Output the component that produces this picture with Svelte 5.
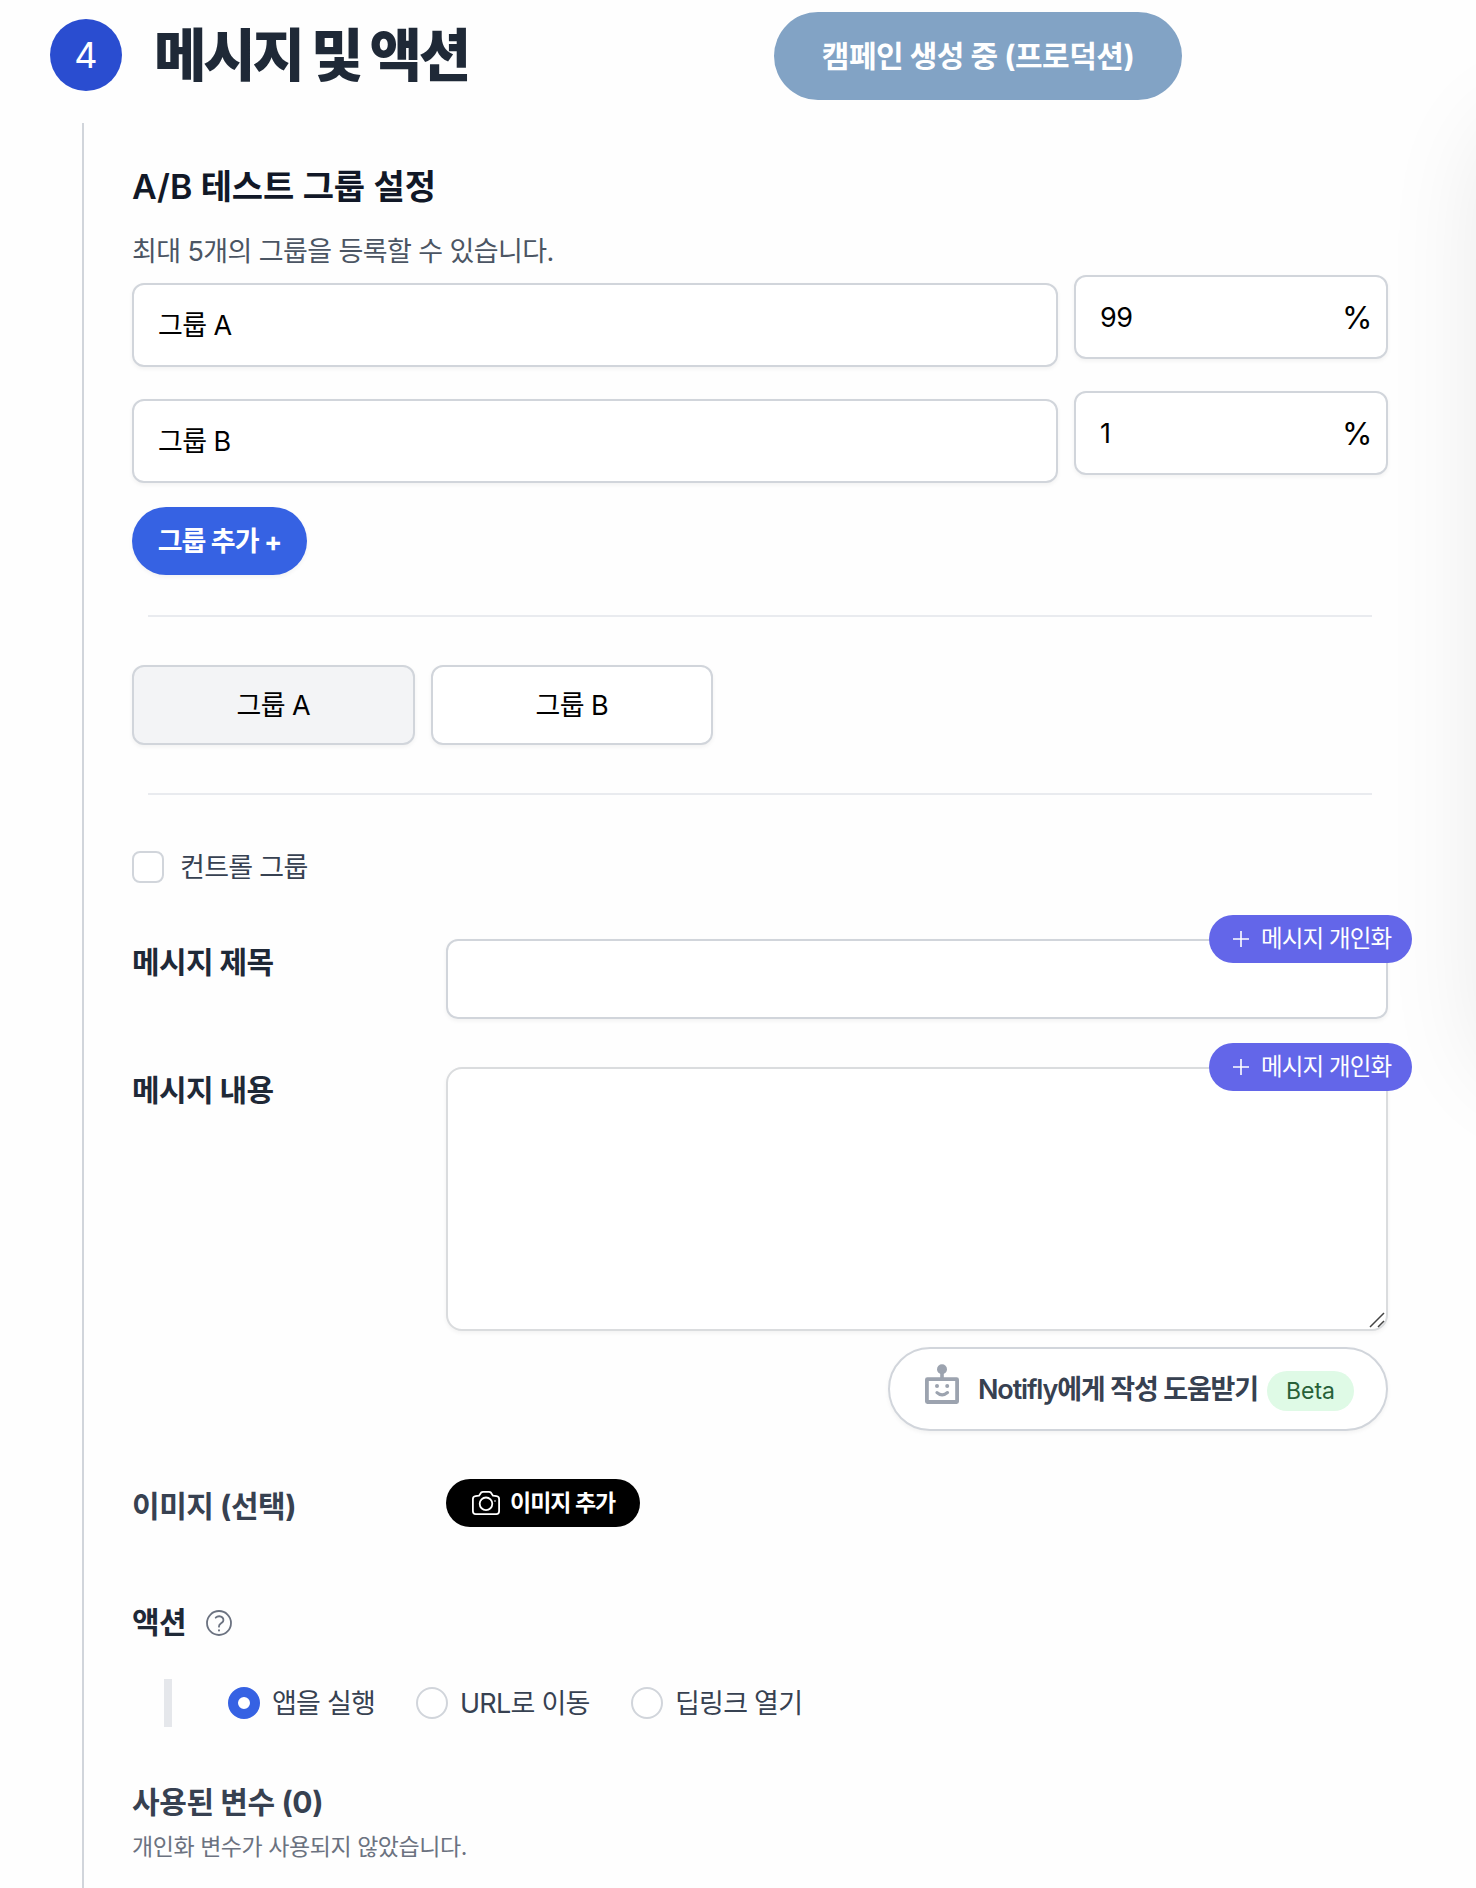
<script>
  let groups = $state([
    { name: '그룹 A', ratio: '99' },
    { name: '그룹 B', ratio: '1' }
  ]);
  let active = $state(0);
  let action = $state(0);
  const actions = ['앱을 실행', 'URL로 이동', '딥링크 열기'];
</script>

{#snippet personalize()}
  <button class="personalize">
    <svg width="16" height="16" viewBox="0 0 16 16"><path d="M8 0v16M0 8h16" stroke="#fff" stroke-width="1.6" /></svg>
    <span>메시지 개인화</span>
  </button>
{/snippet}

<main>
  <div class="side-shadow"></div>
  <header>
    <div class="step">4</div>
    <h1>메시지 및 액션</h1>
    <button class="status"><span>캠페인 생성 중 (프로덕션)</span></button>
  </header>

  <section class="body">
    <h2>A/B 테스트 그룹 설정</h2>
    <p class="desc">최대 5개의 그룹을 등록할 수 있습니다.</p>

    <div class="groups">
      {#each groups as g}
        <div class="group">
          <div class="field name">{g.name}</div>
          <div class="field ratio"><span class="num">{g.ratio}</span><span class="pct">%</span></div>
        </div>
      {/each}
    </div>
    <button class="add"><span>그룹 추가 +</span></button>

    <hr />
    <div class="tabs">
      {#each groups as g, i}
        <button class="tab" class:on={active === i} onclick={() => (active = i)}>{g.name}</button>
      {/each}
    </div>
    <hr />

    <div class="control"><i class="check"></i><span>컨트롤 그룹</span></div>

    <div class="row title-row">
      <h3>메시지 제목</h3>
      <div class="box short">{@render personalize()}</div>
    </div>
    <div class="row content-row">
      <h3>메시지 내용</h3>
      <div class="box tall">
        {@render personalize()}
        <svg class="grip" width="16" height="16" viewBox="0 0 16 16"><path d="M1 15L15 1M9 15l6-6" stroke="#444" stroke-width="1.5" /></svg>
      </div>
    </div>

    <div class="assist-row">
      <button class="assist">
        <svg width="34" height="40" viewBox="0 0 34 40">
          <circle cx="17" cy="5.2" r="5" fill="#9ca3af" />
          <path d="M15.200 8h3.600v7h-3.600z" fill="#9ca3af" />
          <rect x="1.900" y="15.200" width="30.200" height="22.800" rx="0.500" fill="none" stroke="#9ca3af" stroke-width="3.800" stroke-linejoin="round" />
          <circle cx="12" cy="22" r="2" fill="#9ca3af" />
          <circle cx="22.200" cy="22" r="2" fill="#9ca3af" />
          <path d="M12 28.600q5 4.600 10.500 0" fill="none" stroke="#9ca3af" stroke-width="3.200" stroke-linecap="round" />
        </svg>
        <span class="assist-text">Notifly에게 작성 도움받기</span>
        <span class="beta">Beta</span>
      </button>
    </div>

    <div class="row image-row">
      <h3 class="soft">이미지 (선택)</h3>
      <button class="image">
        <svg width="28" height="24" viewBox="0 0 28 24" fill="none" stroke="#fff" stroke-width="1.800" stroke-linejoin="round">
          <path d="M9.200 1.500Q9.800.9 11 .9h6q1.200 0 1.800.6l2.200 3.200 3.500.5q2.600.4 2.600 2.800v12.300q0 2.800-2.800 2.800H3.700q-2.800 0-2.800-2.800V8q0-2.400 2.600-2.800L7 4.700z" />
          <circle cx="14" cy="12.800" r="6.300" />
          <circle cx="23" cy="10" r=".4" stroke-width="1" />
        </svg>
        <span>이미지 추가</span>
      </button>
    </div>

    <div class="action-title">
      <h3>액션</h3>
      <svg width="26" height="26" viewBox="0 0 26 26" fill="none" stroke="#6b7280" stroke-width="1.800" stroke-linecap="round">
        <circle cx="13" cy="13" r="12" />
        <path d="M9.700 7.700c1.900-1.900 5-1.900 6.700-.2 1.500 1.500 1.300 3.700-.3 5-1.500 1.200-3.100 1.700-3.100 3.700v.5" />
        <path d="M13 20.300v.1" stroke-width="2" />
      </svg>
    </div>

    <div class="radios">
      {#each actions as a, i}
        <button class="radio r{i}" onclick={() => (action = i)}><i class:sel={action === i}></i><span>{a}</span></button>
      {/each}
    </div>

    <h3 class="soft vars">사용된 변수 (0)</h3>
    <p class="note">개인화 변수가 사용되지 않았습니다.</p>
  </section>
</main>

<style>
  :global(body) { background: #fefefe; }
  * { box-sizing: border-box; margin: 0; }
  main {
    position: relative;
    width: 1476px;
    height: 1888px;
    overflow: hidden;
    display: flex;
    flex-direction: column;
    font-family: Inter, 'Noto Sans CJK KR', sans-serif;
    font-size: 27px;
    white-space: nowrap;
    color: #000;
  }
  button { font: inherit; border: 0; padding: 0; background: none; color: inherit; display: flex; align-items: center; white-space: nowrap; }
  .side-shadow {
    position: absolute;
    left: 1484px;
    top: 120px;
    width: 400px;
    height: 960px;
    border-radius: 60px;
    box-shadow: 0 0 104px rgba(0, 0, 0, 0.09);
  }
  header { height: 123px; flex: none; display: flex; align-items: flex-start; padding-left: 50px; }
  .step { width: 72px; height: 72px; margin-top: 19px; border-radius: 50%; background: #2a4dd0; color: #fff; font-size: 36px; line-height: 72px; text-align: center; }
  h1 { margin: 11px 0 0 32px; width: 620px; font-size: 57px; line-height: 90px; font-weight: 800; letter-spacing: -3.200px; color: #1f2937; }
  .status { margin-top: 12px; width: 408px; height: 88px; border-radius: 44px; justify-content: center; padding-bottom: 4px; background: #82a3c5; color: #fff; font-size: 30px; font-weight: 700; letter-spacing: -0.500px; }
  .body { flex: 1; margin-left: 82px; border-left: 2px solid #d1d5db; padding: 36px 88px 0 48px; display: flex; flex-direction: column; align-items: flex-start; }
  h2 { font-size: 34px; line-height: 56px; height: 56px; font-weight: 600; letter-spacing: -0.100px; color: #111827; }
  .desc { margin-top: 17px; height: 39px; line-height: 40px; color: #4b5563; letter-spacing: -0.600px; }
  .groups { margin-top: 4px; padding-top: 8px; display: flex; flex-direction: column; gap: 32px; }
  .group { display: flex; gap: 16px; align-items: flex-start; height: 84px; }
  .group .ratio { margin-top: -8px; }
  .field { height: 84px; border: 2px solid #d1d5db; border-radius: 12px; background: #fff; padding: 0 26px 0 24px; display: flex; align-items: center; justify-content: space-between; box-shadow: 0 2px 4px rgba(0, 0, 0, 0.05); letter-spacing: -0.600px; }
  .name { width: 926px; padding-bottom: 3px; }
  .ratio { width: 314px; padding-right: 15px; }
  .num { font-size: 27px; }
  .pct { font-size: 31px; letter-spacing: -1.500px; }
  .add { margin-top: 24px; width: 175px; height: 68px; border-radius: 34px; justify-content: center; padding-bottom: 3px; background: #3662e3; color: #fff; font-weight: 700; letter-spacing: -1px; box-shadow: 0 2px 4px rgba(0, 0, 0, 0.05); }
  hr { width: 1224px; height: 2px; border: 0; background: #e9ebef; margin: 40px 0 0 16px; }
  .tabs { margin-top: 48px; display: flex; gap: 16px; }
  .tab { width: 282.500px; height: 80px; border: 2px solid #d1d5db; border-radius: 12px; background: #fff; justify-content: center; padding-bottom: 3px; letter-spacing: -0.600px; box-shadow: 0 2px 4px rgba(0, 0, 0, 0.05); }
  .tab.on { background: #f3f4f6; }
  .tabs + hr { margin-top: 48px; }
  .control { margin-top: 56px; height: 32px; display: flex; align-items: center; gap: 16px; color: #374151; letter-spacing: -0.700px; }
  .control span { padding-bottom: 3px; }
  .check { width: 32px; height: 32px; border: 2px solid #d1d5db; border-radius: 8px; background: #fff; }
  h3 { font-size: 30px; line-height: 46px; height: 48px; font-weight: 700; letter-spacing: -0.600px; color: #1f2937; }
  h3.soft { color: #374151; line-height: 47px; }
  .row { display: flex; align-items: flex-start; }
  .row h3 { width: 314px; }
  .image-row h3 { letter-spacing: -0.450px; }
  .title-row { margin-top: 56px; }
  .content-row { margin-top: 48px; }
  .box { position: relative; width: 942px; border: 2px solid #d1d5db; border-radius: 12px; background: #fff; box-shadow: 0 2px 4px rgba(0, 0, 0, 0.05); }
  .short { height: 80px; }
  .tall { height: 264px; border-color: #dadcde; border-radius: 16px; }
  .personalize { position: absolute; right: -26px; top: -26px; width: 203px; height: 48px; border-radius: 24px; background: #6366e9; color: #fff; font-size: 23.500px; padding-left: 24px; gap: 12px; letter-spacing: -0.850px; }
  .personalize span { padding-bottom: 4px; }
  .grip { position: absolute; right: 1px; bottom: 1px; }
  .assist-row { align-self: flex-end; margin-top: 16px; }
  .assist { width: 500px; height: 84px; border: 2px solid #d1d5db; border-radius: 42px; background: #fff; padding-left: 35px; box-shadow: 0 2px 4px rgba(0, 0, 0, 0.05); color: #374151; }
  .assist svg { margin-bottom: 10px; }
  .assist-text { width: 289px; margin-left: 19px; padding-bottom: 3px; text-align: left; font-weight: 600; letter-spacing: -1.150px; }
  .beta { width: 87px; height: 40px; margin-top: 4px; border-radius: 20px; background: #dffae6; color: #276138; font-size: 23px; line-height: 40px; text-align: center; }
  .image-row { margin-top: 48px; height: 60px; }
  .image-row h3 { margin-top: 4px; }
  .image { width: 194px; height: 48px; border-radius: 24px; background: #000; color: #fff; font-size: 23px; font-weight: 700; padding-left: 26px; gap: 10px; letter-spacing: -1px; }
  .image span { padding-bottom: 4px; }
  .action-title { margin-top: 60px; display: flex; align-items: center; gap: 20px; height: 48px; }
  .radios { margin: 32px 0 0 32px; height: 48px; border-left: 8px solid #e5e7eb; padding-left: 56px; display: flex; align-items: center; color: #374151; letter-spacing: -0.750px; }
  .radio { gap: 12px; letter-spacing: inherit; }
  .radio span { padding-bottom: 3px; }
  .r0 { width: 188px; }
  .r1 { width: 215px; }
  .radio i { width: 32px; height: 32px; border: 2px solid #d1d5db; border-radius: 50%; background: #fff; }
  .radio i.sel { border: 10px solid #3662e3; }
  .vars { margin-top: 52px; letter-spacing: -0.400px; }
  .note { font-size: 23px; line-height: 40px; color: #6b7280; letter-spacing: -0.450px; }
</style>
